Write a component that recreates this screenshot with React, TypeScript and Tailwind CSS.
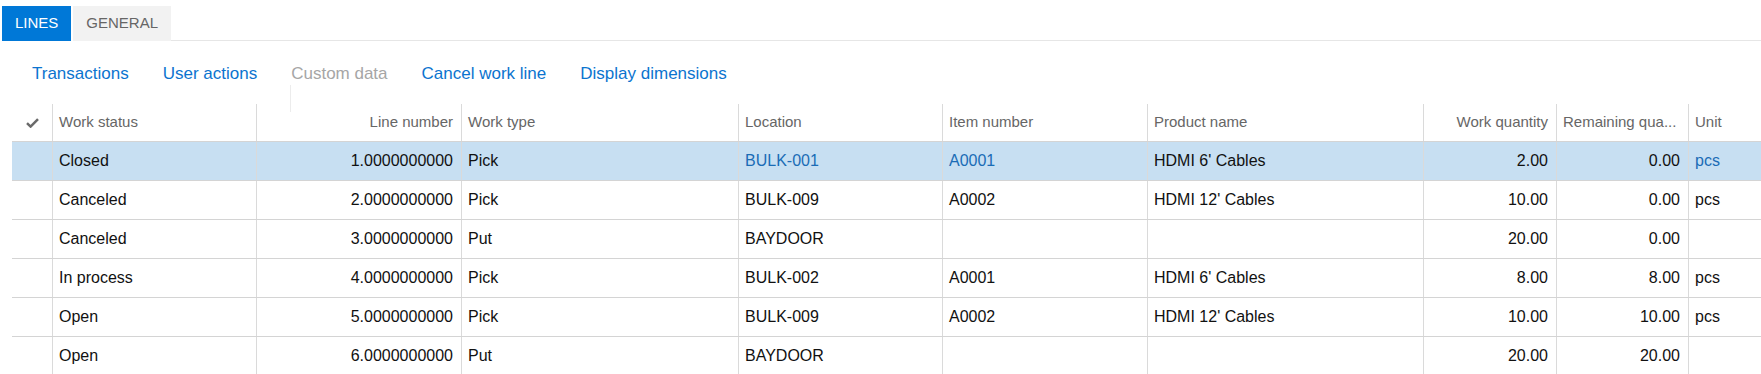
import React from "react";

type Row = {
  status: string;
  line: string;
  type: string;
  location: string;
  item: string;
  product: string;
  qty: string;
  remaining: string;
  unit: string;
};

const rows: Row[] = [
  { status: "Closed", line: "1.0000000000", type: "Pick", location: "BULK-001", item: "A0001", product: "HDMI 6' Cables", qty: "2.00", remaining: "0.00", unit: "pcs" },
  { status: "Canceled", line: "2.0000000000", type: "Pick", location: "BULK-009", item: "A0002", product: "HDMI 12' Cables", qty: "10.00", remaining: "0.00", unit: "pcs" },
  { status: "Canceled", line: "3.0000000000", type: "Put", location: "BAYDOOR", item: "", product: "", qty: "20.00", remaining: "0.00", unit: "" },
  { status: "In process", line: "4.0000000000", type: "Pick", location: "BULK-002", item: "A0001", product: "HDMI 6' Cables", qty: "8.00", remaining: "8.00", unit: "pcs" },
  { status: "Open", line: "5.0000000000", type: "Pick", location: "BULK-009", item: "A0002", product: "HDMI 12' Cables", qty: "10.00", remaining: "10.00", unit: "pcs" },
  { status: "Open", line: "6.0000000000", type: "Put", location: "BAYDOOR", item: "", product: "", qty: "20.00", remaining: "20.00", unit: "" },
];

const cols = "grid grid-cols-[40px_204px_205px_277px_204px_205px_276px_133px_132px_1fr]";
const cell = "flex items-center border-l border-[#dadada] px-[6px] whitespace-nowrap overflow-hidden";
const num = "flex items-center justify-end border-l border-[#dadada] pr-[8px] whitespace-nowrap";

function Check() {
  return (
    <svg width="13" height="10" viewBox="0 0 13 10" fill="none">
      <path d="M1 5.2 L4.6 8.6 L12 1.2" stroke="#6a6a6a" strokeWidth="2.5" />
    </svg>
  );
}

export default function App() {
  const actions = [
    { label: "Transactions", off: false },
    { label: "User actions", off: false },
    { label: "Custom data", off: true },
    { label: "Cancel work line", off: false },
    { label: "Display dimensions", off: false },
  ];

  return (
    <div className="h-[374px] w-full overflow-hidden bg-white font-['Liberation_Sans',Arial,sans-serif]">
      {/* tabs */}
      <div className="flex h-[41px] items-end pl-[2px] pt-[6px]">
        <div className="flex h-full items-center bg-[#0078d7] px-[13px] text-[15px] text-white">LINES</div>
        <div className="ml-[2px] flex h-full items-center bg-[#f2f2f2] px-[13px] text-[15px] text-[#666]">GENERAL</div>
        <div className="h-full flex-1 border-b border-[#e6e6e6]" />
      </div>

      {/* action bar */}
      <div className="relative flex h-[63px] items-center pl-[32px] pt-[2px] text-[17px]">
        {actions.map((a) => (
          <button
            key={a.label}
            type="button"
            className={`mr-[34px] whitespace-nowrap ${a.off ? "text-[#a6a6a6]" : "text-[#0b74cf]"}`}
          >
            {a.label}
          </button>
        ))}
        <div className="absolute left-[290px] top-[44px] h-[27px] w-px bg-[#ececec]" />
      </div>

      {/* grid */}
      <div className="ml-[12px]">
        <div className={`${cols} h-[38px] border-b border-[#d4d4d4] text-[15px] text-[#666]`}>
          <div className="flex items-center justify-center pt-[1px]">
            <Check />
          </div>
          <div className={cell}>Work status</div>
          <div className={num}>Line number</div>
          <div className={cell}>Work type</div>
          <div className={cell}>Location</div>
          <div className={cell}>Item number</div>
          <div className={cell}>Product name</div>
          <div className={num}>Work quantity</div>
          <div className={`${cell} pr-[2px]`}>Remaining qua...</div>
          <div className={cell}>Unit</div>
        </div>

        {rows.map((r, i) => {
          const sel = i === 0;
          const link = sel ? "text-[#1a6cb6]" : "";
          return (
            <div
              key={r.line}
              className={`${cols} h-[39px] border-b border-[#d4d4d4] text-[16px] text-[#111] ${sel ? "bg-[#c7dff2]" : ""}`}
            >
              <div />
              <div className={cell}>{r.status}</div>
              <div className={num}>{r.line}</div>
              <div className={cell}>{r.type}</div>
              <div className={`${cell} ${link}`}>{r.location}</div>
              <div className={`${cell} ${link}`}>{r.item}</div>
              <div className={cell}>{r.product}</div>
              <div className={num}>{r.qty}</div>
              <div className={num}>{r.remaining}</div>
              <div className={`${cell} ${link}`}>{r.unit}</div>
            </div>
          );
        })}
      </div>
    </div>
  );
}
